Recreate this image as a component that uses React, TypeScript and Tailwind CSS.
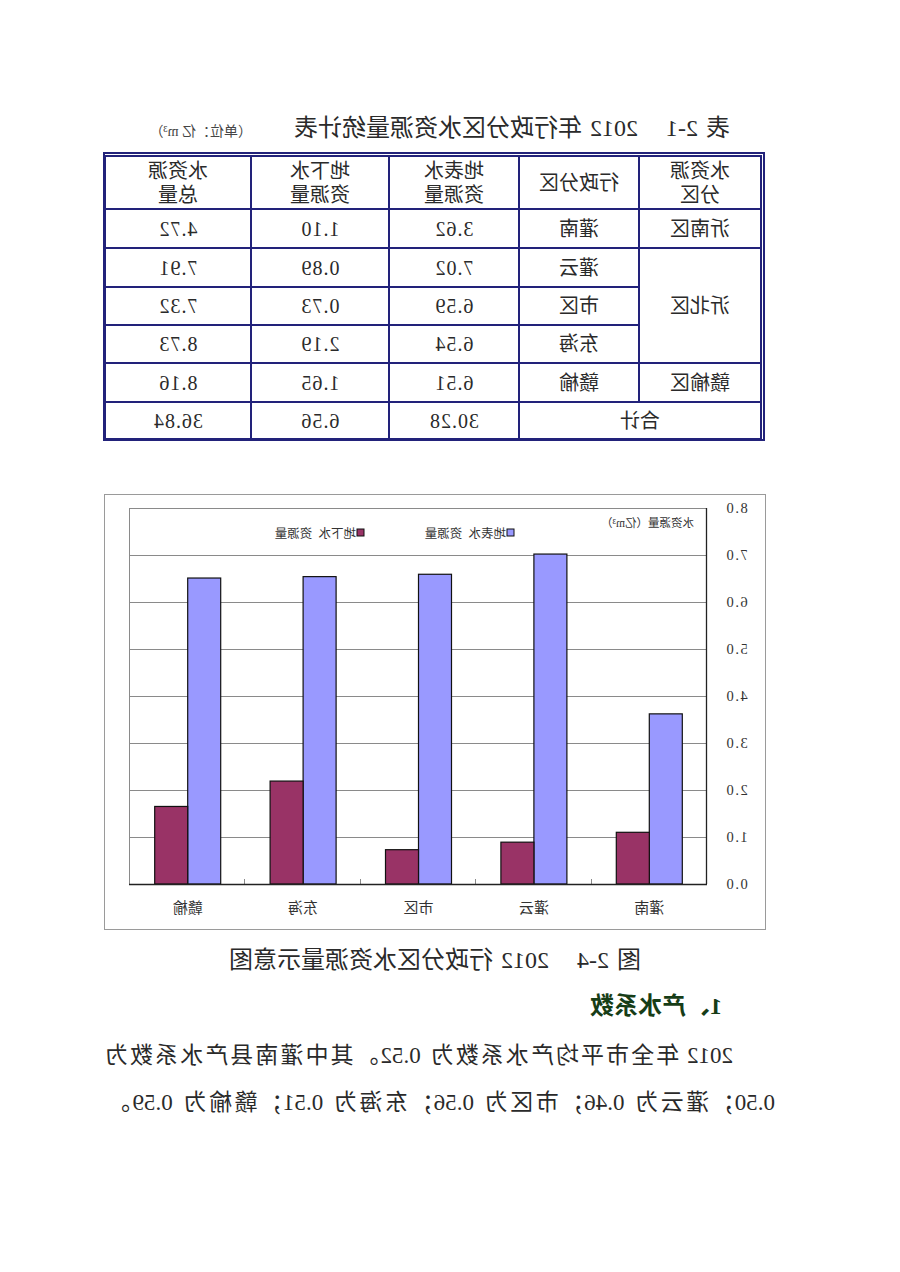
import React from 'react';

const data = [
  { name: '灌南', s: 3.62, g: 1.1 },
  { name: '灌云', s: 7.02, g: 0.89 },
  { name: '市区', s: 6.59, g: 0.73 },
  { name: '东海', s: 6.54, g: 2.19 },
  { name: '赣榆', s: 6.51, g: 1.65 },
];

const FONT = "'Liberation Serif','Noto Sans CJK SC',serif";

function Chart() {
  const x0 = 58;
  const x1 = 635;
  const yTop = 13;
  const yBot = 389;
  const unit = (yBot - yTop) / 8;
  const cw = (x1 - x0) / 5;
  const bw = 33;
  return (
    <svg width={660} height={434} viewBox="0 0 660 434" fontFamily={FONT}>
      {Array.from({ length: 8 }).map((_, i) => {
        const y = Math.round(yBot - unit * (i + 1)) + 0.5;
        return <line key={i} x1={x0} x2={x1} y1={y} y2={y} stroke="#8a8a8a" strokeWidth={1} />;
      })}
      <line x1={x1 + 0.5} x2={x1 + 0.5} y1={yTop} y2={yBot} stroke="#8a8a8a" strokeWidth={1} />
      {Array.from({ length: 9 }).map((_, i) => {
        const y = yBot - unit * i;
        return (
          <text key={i} x={40} y={y + 5} fontSize={14.5} textAnchor="end" fill="#333" letterSpacing={1.5}>
            {`${i}.0`}
          </text>
        );
      })}
      {[1, 2, 3, 4].map((i) => {
        const x = Math.round(x0 + cw * i) + 0.5;
        return <line key={i} x1={x} x2={x} y1={yBot - 5} y2={yBot} stroke="#8a8a8a" strokeWidth={1} />;
      })}
      {data.map((d, i) => {
        const cx = x0 + cw * (i + 0.5);
        const hs = d.s * unit;
        const hg = d.g * unit;
        return (
          <g key={d.name}>
            <rect x={cx - bw} y={yBot - hs} width={bw} height={hs} fill="#9999ff" stroke="#111" strokeWidth={1.2} />
            <rect x={cx} y={yBot - hg} width={bw} height={hg} fill="#993366" stroke="#111" strokeWidth={1.2} />
            <text x={cx} y={418} fontSize={15} textAnchor="middle" fill="#333">
              {d.name}
            </text>
          </g>
        );
      })}
      <line x1={x0 + 0.5} x2={x0 + 0.5} y1={yTop} y2={yBot} stroke="#222" strokeWidth={1.3} />
      <line x1={x0} x2={x1 + 1} y1={yBot + 0.5} y2={yBot + 0.5} stroke="#222" strokeWidth={1.3} />
      <text x={206 - 135} y={32} fontSize={11.5} fill="#333">
        水资源量（亿m³）
      </text>
      <rect x={386 - 135} y={34} width={7} height={7} fill="#9999ff" stroke="#111" strokeWidth={1} />
      <text x={394 - 135} y={42.5} fontSize={12.5} fill="#333">
        地表水&#160;&#160;资源量
      </text>
      <rect x={536 - 135} y={34} width={7} height={7} fill="#993366" stroke="#111" strokeWidth={1} />
      <text x={544 - 135} y={42.5} fontSize={12.5} fill="#333">
        地下水&#160;&#160;资源量
      </text>
    </svg>
  );
}

const cell = 'border-2 border-[#22227a] text-center align-middle p-0';
const num = cell + ' tracking-[1px]';

export default function App() {
  return (
    <div className="w-[900px] h-[1272px] bg-white -scale-x-100 overflow-hidden">
      <div className="[font-family:'Liberation_Serif','Noto_Sans_CJK_SC',serif] text-[#2a2a2a] pt-[112px] pl-[125px] flex flex-col items-start">
        <div className="ml-[45px] flex items-baseline h-[32px]">
          <span className="text-[24px] leading-[32px] flex items-baseline">
            <span>表</span>
            <span className="ml-[8px]">2-1</span>
            <span className="ml-[28px]">2012</span>
            <span className="ml-[8px]">年行政分区水资源量统计表</span>
          </span>
          <span className="ml-[42px] text-[14px] text-[#444]">（单位：亿 m³）</span>
        </div>

        <div className="mt-[8px] ml-[10px] w-[662px] h-[289px] border-2 border-[#22227a] p-px">
          <table className="w-full h-full border-collapse table-fixed text-[20px] leading-[24px]">
            <colgroup>
              <col className="w-[122px]" />
              <col className="w-[120px]" />
              <col className="w-[130px]" />
              <col className="w-[138px]" />
              <col className="w-[146px]" />
            </colgroup>
            <tbody>
              <tr className="h-[53px]">
                <td className={cell}>水资源<br />分区</td>
                <td className={cell}>行政分区</td>
                <td className={cell}>地表水<br />资源量</td>
                <td className={cell}>地下水<br />资源量</td>
                <td className={cell}>水资源<br />总量</td>
              </tr>
              <tr className="h-[39px]">
                <td className={cell}>沂南区</td>
                <td className={cell}>灌南</td>
                <td className={num}>3.62</td>
                <td className={num}>1.10</td>
                <td className={num}>4.72</td>
              </tr>
              <tr className="h-[39px]">
                <td className={cell} rowSpan={3}>沂北区</td>
                <td className={cell}>灌云</td>
                <td className={num}>7.02</td>
                <td className={num}>0.89</td>
                <td className={num}>7.91</td>
              </tr>
              <tr className="h-[38px]">
                <td className={cell}>市区</td>
                <td className={num}>6.59</td>
                <td className={num}>0.73</td>
                <td className={num}>7.32</td>
              </tr>
              <tr className="h-[38px]">
                <td className={cell}>东海</td>
                <td className={num}>6.54</td>
                <td className={num}>2.19</td>
                <td className={num}>8.73</td>
              </tr>
              <tr className="h-[39px]">
                <td className={cell}>赣榆区</td>
                <td className={cell}>赣榆</td>
                <td className={num}>6.51</td>
                <td className={num}>1.65</td>
                <td className={num}>8.16</td>
              </tr>
              <tr className="h-[37px]">
                <td className={cell} colSpan={2}>合计</td>
                <td className={num}>30.28</td>
                <td className={num}>6.56</td>
                <td className={num}>36.84</td>
              </tr>
            </tbody>
          </table>
        </div>

        <div className="mt-[53px] ml-[9px] w-[662px] h-[436px] border border-[#9a9a9a] bg-white">
          <Chart />
        </div>

        <div className="mt-[14px] ml-[9px] w-[662px] flex justify-center items-baseline text-[24px] leading-[32px]">
          <span>图</span>
          <span className="ml-[8px]">2-4</span>
          <span className="ml-[28px]">2012</span>
          <span className="ml-[8px]">行政分区水资源量示意图</span>
        </div>

        <div className="mt-[14px] ml-[53px] text-[24px] leading-[32px] font-bold text-[#173d17]">1、产水系数</div>

        <div className="mt-[10px] w-[670px] text-[23px] leading-[47px]">
          <div className="pl-[42px] text-justify [text-align-last:justify]">2012 年全市平均产水系数为 0.52。其中灌南县产水系数为</div>
          <div className="w-[668px] text-justify [text-align-last:justify]">0.50；灌云为 0.46；市区为 0.56；东海为 0.51；赣榆为 0.59。</div>
        </div>
      </div>
    </div>
  );
}
